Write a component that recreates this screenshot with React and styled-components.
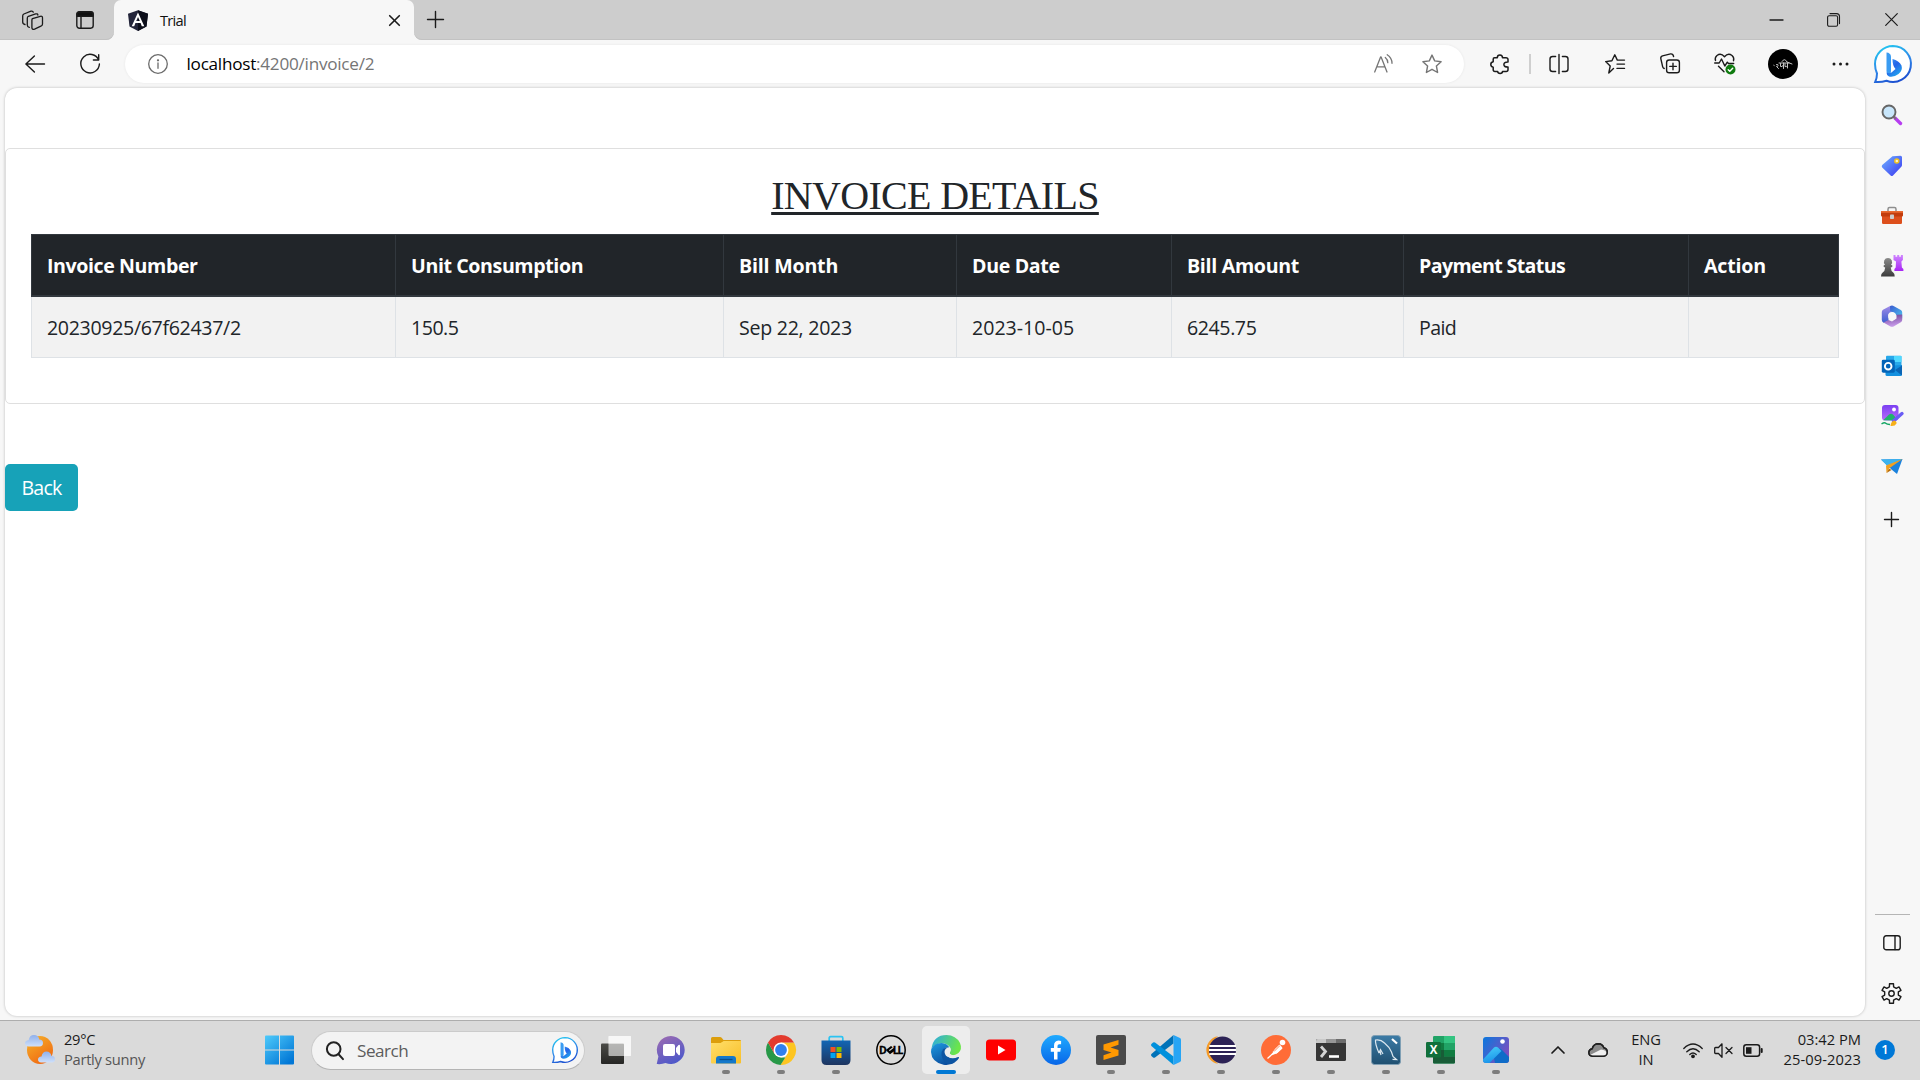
import React from 'react';
import styled, { createGlobalStyle } from 'styled-components';

const GlobalStyle = createGlobalStyle`
  * { box-sizing: border-box; }
  html, body { margin: 0; padding: 0; }
  body { font-family: "Open Sans", "Noto Sans", sans-serif; color: #212529; overflow: hidden; }
  svg { display: block; flex: none; overflow: visible; }
`;

const Screen = styled.div`
  width: 1920px;
  height: 1080px;
  display: flex;
  flex-direction: column;
  background: #f7f7f7;
`;

const Slot = styled.div`
  flex: none;
  width: ${p => (p.$w ? `${p.$w}px` : '100%')};
  height: ${p => (p.$h ? `${p.$h}px` : '100%')};
  display: flex;
  align-items: center;
  justify-content: center;
`;

const Label = styled.span`
  font-size: ${p => p.$size || 14.7}px;
  letter-spacing: ${p => p.$ls || 0}px;
  color: ${p => p.$color || 'inherit'};
  white-space: nowrap;
`;

/* ---------- tab strip ---------- */
const TabStrip = styled.div`
  flex: none;
  height: 40px;
  display: flex;
`;
const StripLeft = styled.div`
  width: 114px;
  padding-left: 11px;
  display: flex;
  background: #cdcdcd;
  border-bottom-right-radius: 8px;
  box-shadow: inset 0 -1px 0 #c2c2c2;
`;
const TabHolder = styled.div`
  width: 300px;
  background: linear-gradient(#cdcdcd 50%, #f7f7f7 50%);
`;
const Tab = styled.div`
  height: 100%;
  padding-left: 14px;
  display: flex;
  align-items: center;
  background: #f7f7f7;
  border-radius: 7px 7px 0 0;
`;
const TabTitle = styled(Label)`
  margin-left: 12px;
  padding-bottom: 1px;
  flex: 1;
  color: #111;
`;
const StripRight = styled.div`
  flex: 1;
  padding-bottom: 1px;
  display: flex;
  background: #cdcdcd;
  border-bottom-left-radius: 8px;
  box-shadow: inset 0 -1px 0 #c2c2c2;
`;
const Grow = styled.div`
  flex: 1;
`;

/* ---------- address bar ---------- */
const Toolbar = styled.div`
  flex: none;
  height: 48px;
  padding: 0 1px 1px 15px;
  display: flex;
  align-items: center;
`;
const AddressPill = styled.div`
  flex: 1;
  height: 38px;
  margin: 0 6px 0 15px;
  padding: 0 8px 0 2px;
  display: flex;
  align-items: center;
  background: #fff;
  border-radius: 19px;
  box-shadow: 0 0 3px rgba(0, 0, 0, 0.07);
`;
const Url = styled(Label)`
  flex: 1;
  margin-left: -1.5px;
  padding-bottom: 1px;
  color: #000;
`;
const UrlPath = styled.span`
  color: #757575;
`;
const Separator = styled.div`
  width: 2px;
  height: 20px;
  background: #cfcfcf;
`;
const Avatar = styled.div`
  width: 30px;
  height: 30px;
  border-radius: 50%;
  background: #000;
  display: flex;
  align-items: center;
  justify-content: center;
`;

/* ---------- page ---------- */
const Body = styled.div`
  flex: 1;
  min-height: 0;
  display: flex;
`;
const Page = styled.main`
  width: 1860px;
  height: 928px;
  margin: 0 0 0 5px;
  padding-top: 60px;
  background: #fff;
  border-radius: 12px;
  box-shadow: 0 0 3px rgba(0, 0, 0, 0.25);
`;
const Card = styled.section`
  height: 256px;
  padding: 24px 25px 0;
  border: 1px solid #dfdfdf;
  border-radius: 5px;
`;
const Title = styled.h2`
  margin: 0;
  height: 61px;
  line-height: 46px;
  text-align: center;
  font-family: "Liberation Serif", serif;
  font-size: 40px;
  font-weight: 400;
  letter-spacing: -0.68px;
  text-decoration: underline;
  text-decoration-thickness: 3px;
  text-underline-offset: 3px;
  text-decoration-skip-ink: none;
`;
const InvoiceTable = styled.table`
  width: 1808px;
  table-layout: fixed;
  border-collapse: separate;
  border-spacing: 0;
`;
const Th = styled.th`
  width: ${p => p.$w}px;
  height: 63px;
  padding: 1px 15px 0;
  text-align: left;
  font-weight: 700;
  font-size: 19.6px;
  letter-spacing: ${p => p.$ls}px;
  color: #fff;
  background: #212529;
  border: solid #32383e;
  border-width: 1px 0 2px 1px;
  &:last-child { border-right-width: 1px; }
`;
const Td = styled.td`
  height: 61px;
  padding: 0 15px;
  font-size: 19.6px;
  letter-spacing: ${p => p.$ls}px;
  background: #f2f2f2;
  border: solid #dee2e6;
  border-width: 0 0 1px 1px;
  &:last-child { border-right-width: 1px; }
`;
const BackButton = styled.button`
  display: block;
  width: 73px;
  height: 47px;
  margin-top: 60px;
  padding: 0;
  border: 0;
  border-radius: 5px;
  background: #17a2b8;
  color: #fff;
  font: 400 19.6px "Open Sans", sans-serif;
  letter-spacing: -0.8px;
`;

/* ---------- edge sidebar ---------- */
const Sidebar = styled.aside`
  flex: 1;
  padding: 3px 2px 2px 0;
  display: flex;
  flex-direction: column;
`;
const SidebarRule = styled.div`
  width: 35px;
  height: 1px;
  margin: 0 0 3px 10px;
  background: #b5b5b5;
`;

/* ---------- taskbar ---------- */
const Taskbar = styled.footer`
  flex: none;
  height: 60px;
  padding: 0 0 1px 25px;
  display: flex;
  align-items: center;
  background: #dadada;
  border-top: 1px solid #adadad;
`;
const Weather = styled.div`
  width: 240px;
  display: flex;
  align-items: center;
  gap: 9px;
`;
const Lines = styled.div`
  width: ${p => (p.$w ? `${p.$w}px` : 'auto')};
  padding-bottom: 2px;
  display: flex;
  flex-direction: column;
  align-items: ${p => p.$align || 'flex-start'};
  line-height: 20px;
  color: #1a1a1a;
`;
const SearchPill = styled.div`
  width: 274px;
  height: 39px;
  margin: 0 3px 0 17px;
  padding: 0 6px 0 14px;
  display: flex;
  align-items: center;
  background: #f3f3f3;
  border: 1px solid #cbcbcb;
  border-bottom-color: #b4b4b4;
  border-radius: 20px;
`;
const SearchText = styled(Label)`
  flex: 1;
  margin-left: 13px;
  color: #5c5c5c;
`;
const AppSlot = styled.div`
  width: 55px;
  height: 48px;
  display: flex;
  justify-content: center;
`;
const AppTile = styled.div`
  width: 48px;
  height: 48px;
  padding-top: 9px;
  display: flex;
  flex-direction: column;
  align-items: center;
  justify-content: space-between;
  border-radius: 5px;
  background: ${p => (p.$active ? '#ededed' : 'transparent')};
`;
const Indicator = styled.div`
  width: ${p => (p.$active ? 20 : 8)}px;
  height: 4px;
  border-radius: 2px;
  background: ${p => (p.$active ? '#0078d4' : p.$running ? '#7d7d7d' : 'transparent')};
`;
const Badge = styled.div`
  width: 20px;
  height: 20px;
  border-radius: 50%;
  background: #0078d7;
  color: #fff;
  font-size: 13px;
  font-weight: 600;
  line-height: 19px;
  text-align: center;
`;

/* ---------- line icons ---------- */
const Line = ({ w = 20, h = w, c = '#1b1b1b', s = 1.4, children }) => (
  <svg width={w} height={h} viewBox={`0 0 ${w} ${h}`} fill="none" stroke={c} strokeWidth={s} strokeLinecap="round" strokeLinejoin="round">{children}</svg>
);
const Workspaces = () => (
  <Line w={21} h={20} s={1.3}>
    <path d="M10.500 8.600 18.300 6.300Q20.600 5.800 20.500 8v6q0 1.200-1.100 1.800l-6.800 3.300Q10 20 9.900 17.600V10Q9.900 9 10.500 8.600z" />
    <path d="M7.300 17.400Q5.300 17 5.300 15V8.300Q5.300 7 6.400 6.300L13.600 3.900Q15.500 3.400 15.900 5" />
    <path d="M3 14.500Q.7 14 .7 12V6Q.7 4.700 1.900 4L9 1.200Q10.800.7 11.300 2.200" />
  </Line>
);
const TabActions = () => (
  <Line w={18} h={18}>
    <rect x=".8" y=".8" width="16.400" height="16.400" rx="2.600" />
    <path d="M1 5.200V3.400Q1 1 3.400 1h11.200Q17 1 17 3.400v1.800z" fill="#111" />
    <path d="M5 5v12" />
  </Line>
);
const AngularIcon = () => (
  <svg width="20" height="21" viewBox="0 0 20 21">
    <path d="M10 .2 0 3.700l1.500 12.900L10 21l8.500-4.400L20 3.700z" fill="#23253a" />
    <path d="M10 .2v20.800l8.500-4.400L20 3.700z" fill="#0c0e1a" />
    <path d="M10 2.600 3.700 16.200h2.500l1.200-3.100h5.200l1.200 3.100h2.500zM10 7l1.800 4.100H8.200z" fill="#fff" />
  </svg>
);
const Cross = ({ w, s = 1.5 }) => <Line w={w} s={s}><path d={`M.7.7 ${w - 0.7} ${w - 0.7}M${w - 0.7}.7.7 ${w - 0.7}`} /></Line>;
const Plus = ({ w, s = 1.4, c }) => <Line w={w} s={s} c={c}><path d={`M${w / 2} .5V${w - 0.5}M.5 ${w / 2}H${w - 0.5}`} /></Line>;
const BackArrow = () => <Line w={20} h={18}><path d="M19.500 9H1M9.400.9.900 9l8.500 8.100" /></Line>;
const Reload = () => <Line w={20} h={20}><path d="M18.700 6A9.300 9.300 0 1 0 19.400 10M18.700.8V6H13.400" /></Line>;
const Info = () => (
  <Line w={20} c="#6b6b6b" s={1.3}><circle cx="10" cy="10" r="9.300" /><path d="M10 9v5.300" /><circle cx="10" cy="6.300" r=".5" fill="#6b6b6b" /></Line>
);
const ReadAloud = () => (
  <Line w={19} h={19} c="#757575" s={1.3}>
    <path d="M.7 18 6.600 3h.5L13 18M2.700 12.800H11M11.300 3.500q2.400 2 2.500 5.200M13.200.800q4.700 3 4.800 8.500" />
  </Line>
);
const STAR = 'M10 1.100 12.700 6.900 19.100 7.700 14.400 12 15.600 18.500 10 15.300 4.400 18.500 5.600 12 .9 7.700 7.300 6.900z';
const Star = () => <Line w={20} c="#757575"><path d={STAR} /></Line>;
const Puzzle = () => (
  <Line w={20} h={20} s={1.5}>
    <path d="M4.500 3.800H7.300Q7.300.9 9.900.9t2.600 2.900H16Q18 3.800 18 5.600V8Q13.900 7.800 13.900 10.500T18 13.100v2.700q0 1.700-1.800 1.700h-3.700q0 1.900-2.400 1.900t-2.400-1.900H5Q3.200 17.500 3.200 15.800V13.200Q.8 12.800.8 10.500T3.200 7.800V5.200Q3.200 3.800 4.500 3.800z" />
  </Line>
);
const SplitScreen = () => (
  <Line w={20} h={20}><path d="M10 .5v19M6.600 2.500H3.600Q1 2.500 1 5v10q0 2.500 2.600 2.500h3M13.400 2.500h3Q19 2.500 19 5v10q0 2.500-2.600 2.500h-3" /></Line>
);
const Favorites = () => (
  <Line w={20} h={20}><path d="M8.500 14.900 3.800 19.300 5.200 12.300.7 7.900 6.900 7 9.800 1.100 12.300 6.400H19.500M12 10.400h7.500M12 14.700h7.500" transform="translate(0 -.3)" /></Line>
);
const Collections = () => (
  <Line w={20} h={21}>
    <rect x="6.600" y="7" width="12.800" height="12.800" rx="2.600" />
    <path d="M13 10.200v6.500M9.800 13.400h6.500M4.200 15.500Q3 15 2.700 13.800L.8 5.600Q.5 3.500 2.500 2.900L10.600.9q2.400-.3 3 2.600" />
  </Line>
);
const Health = () => (
  <svg width="22" height="22" viewBox="0 0 22 22" fill="none" stroke="#1b1b1b" strokeWidth="1.400" strokeLinecap="round" strokeLinejoin="round">
    <path d="M1.500 7.500Q.5 4.600 3 2.500 7-.4 10.500 3.800 14-.4 18 2.500q2.500 2.200 1.500 5.200M.7 10h4.500l2.300-4 3.300 7 2.500-3.800 1.200 1.300h5.200M4.500 13.300l5.500 5.400" />
    <circle cx="16.500" cy="16.500" r="5" fill="#0f7b0f" stroke="none" />
    <path d="m14.200 16.700 1.600 1.500 2.900-3" stroke="#fff" />
  </svg>
);
const AvatarArt = () => (
  <svg width="20" height="14" viewBox="0 0 20 14" fill="none" stroke="#c4c4c4" strokeWidth="1" strokeLinecap="round">
    <path d="M6 6h10M3.500 7.500q2-.5 1.500 1T3.500 9.500l2 2M7.500 6.500v3q2 .8 2.500-1M10.500 6v5.500M12 6.500v3q1.500.8 2-.5M14.500 6v5M9 4.500q2.500-4 5 .5l5 2M.8 8.300l.4.200" />
  </svg>
);
const Dots = () => (
  <svg width="17" height="4" viewBox="0 0 17 4" fill="#1b1b1b"><circle cx="2" cy="2" r="1.500" /><circle cx="8.500" cy="2" r="1.500" /><circle cx="15" cy="2" r="1.500" /></svg>
);
const Bing = ({ w, id }) => (
  <svg width={w} height={w} viewBox="0 0 38 38">
    <defs>
      <linearGradient id={`${id}r`} x1=".2" y1="0" x2=".6" y2="1"><stop offset="0" stopColor="#22c7f0" /><stop offset=".55" stopColor="#2f86e8" /><stop offset="1" stopColor="#1c4fd0" /></linearGradient>
      <linearGradient id={`${id}b`} x1="0" y1="0" x2=".7" y2="1"><stop offset="0" stopColor="#3aa0f5" /><stop offset=".5" stopColor="#2563e8" /><stop offset="1" stopColor="#22a8ee" /></linearGradient>
    </defs>
    <path d="M19 1A18 18 0 1 1 12.500 35.800Q7 37.500 1.200 37 3 33 3 28.500 1 24 1 19A18 18 0 0 1 19 1z" fill="#fff" stroke={`url(#${id}r)`} strokeWidth="2" />
    <path d="M12.500 7.500q4 .3 4.500 4V26q0 3-2.500 3.500-2-.5-2-3.500z" fill="#3a9cf2" />
    <path d="M18.500 14q6.500 1.500 9 6.500 1.500 5-3 8.500-4.500 3.500-9.500 2.500-2.500-1-2.500-4 2.500 1.500 5 0l4-3.500Q18.500 21 18.500 14z" fill={`url(#${id}b)`} />
  </svg>
);
const Minimize = () => <Line w={13} h={2} s={1.3}><path d="M0 1h13" /></Line>;
const Restore = () => <Line w={13} h={14} s={1.1}><rect x=".6" y="2.800" width="10" height="10.500" rx="1.500" /><path d="M3 .6h6.500q3 0 3 3v7" /></Line>;
const PanelIcon = () => <Line w={18} h={16}><rect x=".8" y=".8" width="16.400" height="14" rx="2.400" /><path d="M12 1v13.600" /></Line>;
const Gear = () => {
  const pts = [];
  for (let i = 0; i < 6; i += 1) {
    const a = (i * Math.PI) / 3 - Math.PI / 2;
    [[-0.3, 7], [-0.2, 10], [0.2, 10], [0.3, 7]].forEach(([d, r]) => pts.push(`${(10.5 + r * Math.cos(a + d)).toFixed(2)} ${(10.5 + r * Math.sin(a + d)).toFixed(2)}`));
  }
  return <Line w={21} h={21}><path d={`M${pts.join('L')}z`} /><circle cx="10.500" cy="10.500" r="2.700" /></Line>;
};

/* ---------- sidebar icons ---------- */
const SideSvg = ({ children }) => <svg width="22" height="22" viewBox="0 0 22 22">{children}</svg>;
const Grad = ({ id, a, b, x2 = 1, y2 = 1 }) => (
  <linearGradient id={id} x1="0" y1="0" x2={x2} y2={y2}><stop offset="0" stopColor={a} /><stop offset="1" stopColor={b} /></linearGradient>
);
const SideSearch = () => (
  <SideSvg>
    <g transform="translate(0 -1)">
      <path d="m14 14 5.500 5.500" stroke="#b63df0" strokeWidth="3.400" strokeLinecap="round" />
      <path d="m12.500 12.500 2.500 2.500" stroke="#777" strokeWidth="1.800" />
      <circle cx="8" cy="8" r="6.500" fill="#c8e6fb" stroke="#666" strokeWidth="1.900" />
    </g>
  </SideSvg>
);
const SideTag = () => (
  <SideSvg>
    <defs><Grad id="tag" a="#6fb4ff" b="#3a35f0" /></defs>
    <path d="M11.500 1.200 19.500.7Q21 .7 21 2.200V10q0 1-.7 1.700L12 20.500q-1.200 1-2.400 0L1.200 12.400q-1-1.200 0-2.400z" fill="url(#tag)" />
    <circle cx="15.800" cy="6" r="2" fill="#fff5c8" stroke="#f0c020" strokeWidth="1.500" />
  </SideSvg>
);
const SideToolbox = () => (
  <SideSvg>
    <path d="M7 6V4.200Q7 2.500 8.500 2.500h5Q15 2.500 15 4.200V6" fill="none" stroke="#8e8e8e" strokeWidth="1.500" />
    <rect x="1" y="9" width="20" height="10" rx="1.200" fill="#dd4f1c" />
    <path d="M0 7q0-1 1-1h20q1 0 1 1v3.500q0 1-1 1H1q-1 0-1-1z" fill="#c23c0c" />
    <path d="M0 7q0-1 1-1h20q1 0 1 1v.8H0z" fill="#ea6a30" />
    <rect x="9" y="9.500" width="4" height="4.500" rx=".8" fill="#ccc" />
  </SideSvg>
);
const SideGames = () => (
  <SideSvg>
    <defs><Grad id="rook" a="#cf86ff" b="#a825f4" x2={0} /><Grad id="pawn" a="#8a8a8a" b="#3c3c3c" x2={0} /></defs>
    <path d="M12.500 0h2v1.800h1.700V0h2v1.800h1.700V0h2v5l-1.500 1.500.5 6 1.500 1.500v2h-9v-2l1.300-1.500.3-6L12.500 5z" fill="url(#rook)" />
    <path d="M7 3a4 4 0 0 1 3 6.700q1.500.3 1.500 1.300T9.700 12.500q.3 3.500 2.500 5 1.500 1 1.500 4H0Q0 18.500 1.700 17.500q2.300-1.500 2.500-5Q2.500 12 2.500 11T4 9.700A4 4 0 0 1 7 3z" fill="url(#pawn)" />
  </SideSvg>
);
const SideM365 = () => (
  <SideSvg>
    <defs><Grad id="m1" a="#a18be8" b="#3b5fd0" x2={0} /><Grad id="m2" a="#3a5bd0" b="#4cc4f0" /><Grad id="m3" a="#6d4296" b="#c69ae8" x2={0.2} /></defs>
    <path d="M9.500.8 11 7.500 7.500 9.500v6L3 18Q.8 16.800.8 15V7Q.8 5.500 2 4.800z" fill="url(#m1)" />
    <path d="M9 1.200q2-1.400 4 0l6.800 3.700q1.400.9 1.400 2.500v6.100l-6.400-3.700V9L9.200 6z" fill="url(#m2)" />
    <path d="m21.200 9.500V15q0 1.500-1.400 2.300L13 21.200q-2 1.100-4 0L2.500 17.500l5-2.500 3.500 1.500 4.500-3v-3.700z" fill="url(#m3)" />
    <circle cx="11" cy="11" r="3.900" fill="#f7f7f7" />
  </SideSvg>
);
const Letter = styled.text`
  font-family: "Open Sans", "Noto Sans", sans-serif;
  font-weight: 700;
  fill: ${p => p.$fill || '#fff'};
  text-anchor: middle;
`;
const SideOutlook = () => (
  <SideSvg>
    <rect x="5" y=".7" width="15.500" height="14" rx="1" fill="#28a8ea" />
    <rect x="13" y="1" width="7.500" height="6" fill="#50d9ff" />
    <path d="M4.500 11 21 10v9.500q0 1.500-1.500 1.500H6q-1.500 0-1.500-1.500z" fill="#1490df" />
    <path d="M21 10.500 14 15l7 5.500z" fill="#0a65b5" />
    <rect x=".8" y="4.700" width="13" height="13" rx="1.400" fill="#0364b8" />
    <circle cx="7.200" cy="11.200" r="3.300" fill="none" stroke="#fff" strokeWidth="1.900" />
  </SideSvg>
);
const SideDesigner = () => (
  <SideSvg>
    <defs><Grad id="ds" a="#7a3ff2" b="#b96cf8" x2={0} /></defs>
    <rect x="1" y="0" width="16.500" height="15.500" rx="3" fill="url(#ds)" />
    <path d="M2.200 15.300 8 9.400q2-1.500 4 0l3.500 4.200-1.500 2z" fill="#20b36b" />
    <circle cx="13" cy="4.500" r="1.900" fill="#fff" />
    <path d="M12.500 16 21 8.500" stroke="#6a5cf5" strokeWidth="3.400" strokeLinecap="round" />
    <path d="M9.500 21q.3-4.500 3.500-5.500 3 1 2.500 3-1.500 3-6 2.500z" fill="#f7b018" />
    <path d="M.5 19q3-2 4.200-.8t4.300 1.300" stroke="#16a765" strokeWidth="1.500" fill="none" />
  </SideSvg>
);
const SideDrop = () => (
  <SideSvg>
    <path d="M0 4.500 21.500 4 16 19 10.500 14.500z" fill="#1b82dd" />
    <path d="M0 4.500 21.500 4 6.500 11z" fill="#3db3ee" />
    <path d="M21.500 4 5 10.500 5.500 18 8 13.500z" fill="#f0a020" />
    <path d="m5.500 18 2.500-4.500 2.500 1.500z" fill="#b86c08" />
  </SideSvg>
);

/* ---------- taskbar icons ---------- */
const App30 = ({ children }) => <svg width="30" height="30" viewBox="0 0 30 30">{children}</svg>;
const WeatherIcon = () => (
  <svg width="30" height="32" viewBox="0 0 30 32">
    <defs><Grad id="sun" a="#f6b52c" b="#f06a12" x2={0.6} /><Grad id="cl" a="#8fb0ec" b="#cfe0fa" x2={0} /></defs>
    <ellipse cx="15" cy="16" rx="13" ry="14" fill="url(#sun)" />
    <path d="M3.500 12.500Q0 12 0 9.300 0 6.500 3.600 6.200 4.500 1 9 1t5.300 4.500q3.700.2 3.700 3.600t-3.500 3.400z" fill="url(#cl)" />
    <path d="M16 28.500q-3-.3-3-3t3.500-3Q17.500 17.500 21.500 17.500T26.500 22q3.500 0 3.500 3.300t-3.400 3.200z" fill="url(#cl)" />
  </svg>
);
const WindowsLogo = () => (
  <svg width="29" height="30" viewBox="0 0 29 30">
    <defs><linearGradient id="win" gradientUnits="userSpaceOnUse" x1="0" y1="0" x2="24" y2="28"><stop offset="0" stopColor="#4fcbfb" /><stop offset="1" stopColor="#0177d6" /></linearGradient></defs>
    <path fill="url(#win)" d="M1 .5h13v14H0V1.500Q0 .5 1 .5zM15 .5h13q1 0 1 1v13H15zM0 15.500h14v14H1q-1 0-1-1zM15 15.500h14v13q0 1-1 1H15z" />
  </svg>
);
const SearchGlass = () => <Line w={18} h={19} s={2} c="#222"><circle cx="7.700" cy="8" r="6.800" /><path d="m12.600 13.300 4.400 4.800" /></Line>;
const TaskView = () => (
  <App30>
    <defs><Grad id="tv" a="#4a4a46" b="#262624" x2={0} /></defs>
    <rect x="0" y="8.500" width="23" height="20.500" rx="1" fill="url(#tv)" />
    <rect x="7.500" y="1" width="22.500" height="20" rx="1" fill="#fff" opacity=".6" />
    <path d="M7.500 1H30v20h-7V8.500H7.500z" fill="#fbfbfb" opacity=".6" />
  </App30>
);
const Teams = () => (
  <App30>
    <defs><Grad id="tm" a="#a06cb0" b="#5059c9" x2={0.5} /></defs>
    <path d="M15 1a14 14 0 1 1-5.500 27Q5.500 29.500 1.200 29 .3 28.700 1 27.700L2.400 21.500A14 14 0 0 1 15 1z" fill="url(#tm)" />
    <rect x="7" y="9" width="12" height="12" rx="2" fill="#fff" /><path d="m20 13 2.500-3Q24 9 24 11v8q0 2-1.500 1L20 17z" fill="#fff" />
  </App30>
);
const Explorer = () => (
  <App30>
    <defs><Grad id="ex" a="#ffdf6b" b="#f8bf28" /></defs>
    <path d="M0 3.500Q0 2 1.500 2H9q1 0 1.700.8L12.500 5H29q1 0 1 1v7H0z" fill="#dc9e0c" />
    <path d="M0 8h9.500L12.700 6H30v21.500q0 1-1 1H1q-1 0-1-1z" fill="url(#ex)" />
    <path d="M5 28.500V24q0-3 3-3h14q3 0 3 3v4.500z" fill="#1478ca" /><path d="M8.500 24.500h13" stroke="#0b4f8c" strokeWidth="1.300" />
  </App30>
);
const Chrome = () => (
  <App30>
    <path d="M15 7.500H28A15 15 0 0 1 14.500 30L21.500 18.700z" fill="#fdc521" />
    <path d="M2 7.500 8.500 18.700 15 22.500h4.300L14.500 30A15 15 0 0 1 2 7.500z" fill="#279847" />
    <path d="M15 7.500h13A15 15 0 0 0 2 7.500l6.500 11.200z" fill="#e33b2e" />
    <circle cx="15" cy="15" r="7.500" fill="#fff" /><circle cx="15" cy="15" r="5.900" fill="#3180ee" />
  </App30>
);
const Store = () => (
  <App30>
    <defs><Grad id="st" a="#1266b4" b="#1e3560" x2={0} /></defs>
    <path d="M8.200 6.500V3Q8.200 1.700 9.500 1.700h11Q21.800 1.700 21.800 3V6.500" fill="none" stroke="#2bc3f2" strokeWidth="1.700" />
    <path d="M.5 5.500h29V25q0 5-5 5h-19q-5 0-5-5z" fill="url(#st)" />
    <path d="M9.500 12h5v5h-5z" fill="#f25022" /><path d="M15.500 12h5v5h-5z" fill="#7fba00" /><path d="M9.500 18h5v5h-5z" fill="#00a4ef" /><path d="M15.500 18h5v5h-5z" fill="#ffb900" />
  </App30>
);
const Dell = () => (
  <App30>
    <circle cx="15" cy="15" r="14.200" fill="none" stroke="#000" strokeWidth="1.500" />
    <Letter x="7" y="18.700" fontSize="10.500" $fill="#000" stroke="#000" strokeWidth=".3">D</Letter>
    <Letter x="19.800" y="18.700" fontSize="10.500" $fill="#000" stroke="#000" strokeWidth=".3">L</Letter>
    <Letter x="24.500" y="18.700" fontSize="10.500" $fill="#000" stroke="#000" strokeWidth=".3">L</Letter>
    <path d="m9.800 15 5.200-4 1.700 1.300-3.800 3 .9.700 3.800-3 .8.700v2.300L14 19.200z" fill="#000" />
  </App30>
);
const Edge = () => (
  <App30>
    <defs><Grad id="e1" a="#2aa9e8" b="#6be54a" x2={1} y2={0.3} /><Grad id="e2" a="#1f9ae0" b="#0b4fa0" x2={0.5} /></defs>
    <path d="M.5 13.500Q2.500 0 15.500 0 25 .3 29 8q2.500 6-1.500 10-4 3.300-8 1.500-1.500-1-.5-2.500 1.500-2 .5-4Q17 8.500 10.500 8.300 4 8.500.5 13.500z" fill="url(#e1)" />
    <path d="M.3 14Q3 8 10.500 8q5.500.3 8 4.500-4.500-1.200-6.500 2.500-2 5.500 2.500 10 4 3.500 9.500 2-5 4-11.500 2.800Q.5 27 0 17z" fill="url(#e2)" />
    <path d="M18 12.200q-8-.5-7.500 8 1.200 8.500 9.500 8.800 5-1.300 8-6 .2-1.500-1-1-7 3-11.300-1.500Q14 16.500 18 12.200z" fill="#0d55a3" />
    <path d="M18.500 12.300q-5 .7-5 4.700.5 4.500 5 5.500 4 .7 8.500-1 1-.4 1.400.4l.6-2.900-3.500 1.500q-4.500.5-6.500-1.500-.7-1 .2-2.300 1.300-2.300-.7-4.400z" fill="#ededed" />
  </App30>
);
const YouTube = () => <App30><rect x="0" y="4.500" width="30" height="21" rx="3.500" fill="#f00" /><path d="M12 10.500v9l7.500-4.500z" fill="#fff" /></App30>;
const Facebook = () => (
  <App30>
    <defs><Grad id="fb" a="#1faaff" b="#0866e8" x2={0} /></defs>
    <circle cx="15" cy="15" r="15" fill="url(#fb)" />
    <path d="M13 24.500V16.800H9.800V13H13v-2.200q0-5 4.600-5.200 1.500 0 2.500.3v3.300h-1.900q-1.700.2-1.700 1.900V13h3.400l-.6 3.800h-2.800v7.700z" fill="#fff" />
  </App30>
);
const Sublime = () => (
  <App30>
    <rect width="30" height="30" rx="2" fill="#4a4a4a" />
    <path d="m7.500 9.500 15-4.500v4.800l-8 2.700 8 2.500v5.500l-15 4.500v-4.800l8-2.700-8-2.500z" fill="#ff9800" />
  </App30>
);
const VSCode = () => (
  <App30>
    <path d="M22.500 0v8.500L4 22.500q-1 .6-1.900 0L.4 21q-.8-1 0-1.900z" fill="#0072b8" />
    <path d="M22.500 30v-8.500L4 7.500Q3 6.900 2.100 7.500L.4 9q-.8 1 0 1.900z" fill="#0090dc" />
    <path d="M22.500 0 29 3q1 .5 1 1.700v20.600q0 1.200-1 1.700l-6.500 3z" fill="#27a5f5" />
  </App30>
);
const Eclipse = () => (
  <App30>
    <path d="M12 1.200A14 14 0 0 0 12 28.800 17 17 0 0 1 12 1.200z" fill="#f59b28" />
    <circle cx="16.500" cy="15" r="13.500" fill="#2c2255" />
    <path d="M3.300 11h26.700M3 15h27M3.300 19h26.700" stroke="#fff" strokeWidth="1.900" />
  </App30>
);
const Postman = () => (
  <App30>
    <circle cx="15" cy="15" r="15" fill="#ff6c37" />
    <circle cx="21.500" cy="7.500" r="2.800" fill="#fff" />
    <path d="m19 9.500 2.500 3.500-5 5-6 2.500 3.500-6.500z" fill="#fff" /><path d="M6.500 23.500 14 16.500M12 17.500l6.500-7M14.500 18.500 21 13" stroke="#fff" strokeWidth="1.300" /><path d="m13 16.500 6-6" stroke="#ff6c37" strokeWidth=".8" />
  </App30>
);
const Terminal = () => (
  <App30>
    <rect x="0" y="4" width="30" height="22" rx="1.500" fill="#363636" /><path d="M0 5.500Q0 4 1.500 4H10v4H0z" fill="#c9c9c9" /><path d="M10 4h10v4H10z" fill="#979797" /><path d="M20 4h8.500Q30 4 30 5.500V8H20z" fill="#6c6c6c" />
    <path d="M5 11.500 9.500 16.500 5 22" stroke="#d4d4d4" strokeWidth="2.800" fill="none" /><path d="M13 21.500h10" stroke="#fff" strokeWidth="2.600" />
  </App30>
);
const MySQL = () => (
  <App30>
    <defs><Grad id="my" a="#3c7ba6" b="#1f4f70" x2={0} /></defs>
    <rect x=".5" y=".5" width="29" height="29" rx="3" fill="url(#my)" stroke="#7f9fb4" />
    <path d="M8 18Q4 9 4.500 5q5-1 9 3 5 4 7 9l1.500 4.500 3.500 3-4-.2M8 18l1.500-3.500L12 19M9 16l1 4" fill="none" stroke="#dce8f0" strokeWidth="1.200" />
    <path d="m21 4 5 4.500" stroke="#fff" strokeWidth="2.200" fill="none" />
  </App30>
);
const Excel = () => (
  <App30>
    <rect x="7" y="1" width="22" height="27.500" rx="1.300" fill="#21a366" /><path d="M18 1h9.700q1.300 0 1.300 1.300V8H18z" fill="#33c481" /><path d="M7 8h11v7H7z" fill="#107c41" /><path d="M18 15h11v6.500H18z" fill="#107c41" /><path d="M7 15h11v6.500h11v5.700q0 1.300-1.300 1.300H8.300Q7 28.500 7 27.200z" fill="#185c37" />
    <rect x="0" y="7" width="15" height="15.500" rx="1.300" fill="#10703b" />
    <Letter x="7.500" y="19" fontSize="11.500">X</Letter>
  </App30>
);
const Photos = () => (
  <App30>
    <defs><Grad id="ph" a="#0a78dd" b="#7b4fc0" x2={1} y2={0.6} /><Grad id="ph2" a="#49d0fa" b="#1c95ea" x2={0.3} /></defs>
    <rect x="2" y="2" width="26" height="26" rx="3" fill="url(#ph)" />
    <path d="M12 18.500 17 14q1.500-.8 3 0L28 22v3q0 3-3 3H14z" fill="#0f6cc8" />
    <path d="M2 24.500 13 12.500q2-1.700 4 0l3.500 3.500L8.500 28H5q-3 0-3-3z" fill="url(#ph2)" />
    <circle cx="21.500" cy="6.500" r="2.300" fill="#fff" />
  </App30>
);

const ChevronUp = () => <Line w={14} h={8} s={1.7}><path d="m1 7 6-6 6 6" /></Line>;
const CloudIcon = () => (
  <Line w={20} h={14} s={1.4} c="#222">
    <path d="M4.700 13.300Q.8 13 .8 9.500q.2-3 3.400-3.700Q5.500.8 10.500.8q4 .2 5.300 4 3.500.8 3.500 4.400-.3 3.700-4 4.100z" fill="#8b8b8b" />
    <path d="M2 12 13 6.500q5.500.5 5.500 3.500t-3.200 2.800H4.700z" fill="#f0f0f0" stroke="none" />
    <path d="M4.700 13.300Q.8 13 .8 9.500q.2-3 3.400-3.700Q5.500.8 10.500.8q4 .2 5.300 4 3.500.8 3.500 4.400-.3 3.700-4 4.100z" />
  </Line>
);
const Wifi = () => (
  <Line w={20} h={15} s={1.4}><path d="M.8 5.500q9.200-8.800 18.400 0M3.800 8.700q6.200-6 12.400 0M6.800 11.500q3.200-3 6.400 0" /><circle cx="10" cy="13.300" r="1.200" fill="#1b1b1b" /></Line>
);
const Muted = () => <Line w={19} h={15} s={1.3}><path d="M8 .8 4.500 4.500H1.500Q.7 4.500.7 5.300v4.400q0 .8.8.8h3L8 14.200zM12 4.500l6 6M18 4.500l-6 6" /></Line>;
const Battery = () => <Line w={20} h={13} s={1.5}><rect x=".8" y=".8" width="15.800" height="11.400" rx="2.500" /><path d="M18.700 5v3" strokeWidth="2" /><path d="M3 3.200h5.500v6.600H3z" fill="#1b1b1b" stroke="none" /></Line>;

const columns = [
  { head: 'Invoice Number', hls: -0.41, w: 364, value: '20230925/67f62437/2', vls: -0.34 },
  { head: 'Unit Consumption', hls: -0.4, w: 328, value: '150.5', vls: -0.5 },
  { head: 'Bill Month', hls: -0.2, w: 233, value: 'Sep 22, 2023', vls: -0.27 },
  { head: 'Due Date', hls: -0.35, w: 215, value: '2023-10-05', vls: 0 },
  { head: 'Bill Amount', hls: -0.3, w: 232, value: '6245.75', vls: -0.42 },
  { head: 'Payment Status', hls: -0.63, w: 285, value: 'Paid', vls: -0.6 },
  { head: 'Action', hls: -0.2, w: 151, value: '', vls: 0 },
];

const apps = [
  { Icon: TaskView }, { Icon: Teams }, { Icon: Explorer, running: true }, { Icon: Chrome, running: true },
  { Icon: Store, running: true }, { Icon: Dell }, { Icon: Edge, running: true, active: true }, { Icon: YouTube },
  { Icon: Facebook }, { Icon: Sublime, running: true }, { Icon: VSCode, running: true }, { Icon: Eclipse, running: true },
  { Icon: Postman, running: true }, { Icon: Terminal, running: true }, { Icon: MySQL, running: true },
  { Icon: Excel, running: true }, { Icon: Photos, running: true },
];

const sideIcons = [SideSearch, SideTag, SideToolbox, SideGames, SideM365, SideOutlook, SideDesigner, SideDrop];

export default function App() {
  return (
    <Screen>
      <GlobalStyle />
      <TabStrip>
        <StripLeft>
          <Slot $w={42}><Workspaces /></Slot>
          <Slot $w={64}><TabActions /></Slot>
        </StripLeft>
        <TabHolder>
          <Tab>
            <AngularIcon />
            <TabTitle $ls={-0.75}>Trial</TabTitle>
            <Slot $w={40}><Cross w={11} s={1.6} /></Slot>
          </Tab>
        </TabHolder>
        <StripRight>
          <Slot $w={43}><Plus w={17} /></Slot>
          <Grow />
          <Slot $w={57}><Minimize /></Slot>
          <Slot $w={57}><Restore /></Slot>
          <Slot $w={58}><Cross w={13} s={1.2} /></Slot>
        </StripRight>
      </TabStrip>

      <Toolbar>
        <Slot $w={40}><BackArrow /></Slot>
        <Slot $w={15} />
        <Slot $w={40}><Reload /></Slot>
        <AddressPill>
          <Slot $w={61}><Info /></Slot>
          <Url $size={17.15} $ls={-0.25}>localhost<UrlPath>:4200/invoice/2</UrlPath></Url>
          <Slot $w={50}><ReadAloud /></Slot>
          <Slot $w={48}><Star /></Slot>
        </AddressPill>
        <Slot $w={59}><Puzzle /></Slot>
        <Separator />
        <Slot $w={56}><SplitScreen /></Slot>
        <Slot $w={56}><Favorites /></Slot>
        <Slot $w={54}><Collections /></Slot>
        <Slot $w={56}><Health /></Slot>
        <Slot $w={60}><Avatar><AvatarArt /></Avatar></Slot>
        <Slot $w={54}><Dots /></Slot>
        <Slot $w={52}><Bing w={38} id="bt" /></Slot>
      </Toolbar>

      <Body>
        <Page>
          <Card>
            <Title>INVOICE DETAILS</Title>
            <InvoiceTable>
              <thead>
                <tr>{columns.map(c => <Th key={c.head} $w={c.w} $ls={c.hls}>{c.head}</Th>)}</tr>
              </thead>
              <tbody>
                <tr>{columns.map(c => <Td key={c.head} $ls={c.vls}>{c.value}</Td>)}</tr>
              </tbody>
            </InvoiceTable>
          </Card>
          <BackButton>Back</BackButton>
        </Page>
        <Sidebar>
          {sideIcons.map((Icon, i) => <Slot key={i} $h={50}><Icon /></Slot>)}
          <Slot $h={56}><Plus w={15} /></Slot>
          <Grow />
          <SidebarRule />
          <Slot $h={50}><PanelIcon /></Slot>
          <Slot $h={50}><Gear /></Slot>
        </Sidebar>
      </Body>

      <Taskbar>
        <Weather>
          <WeatherIcon />
          <Lines>
            <Label $ls={-0.3}>29°C</Label>
            <Label $ls={-0.29} $color="#555">Partly sunny</Label>
          </Lines>
        </Weather>
        <WindowsLogo />
        <SearchPill>
          <SearchGlass />
          <SearchText $size={17.15} $ls={-0.5}>Search</SearchText>
          <Bing w={26} id="bs" />
        </SearchPill>
        {apps.map(({ Icon, running, active }, i) => (
          <AppSlot key={i}>
            <AppTile $active={active}>
              <Icon />
              <Indicator $running={running} $active={active} />
            </AppTile>
          </AppSlot>
        ))}
        <Grow />
        <Slot $w={40}><ChevronUp /></Slot>
        <Slot $w={40}><CloudIcon /></Slot>
        <Lines $w={56} $align="center">
          <Label $ls={-0.1}>ENG</Label>
          <Label>IN</Label>
        </Lines>
        <Slot $w={37}><Wifi /></Slot>
        <Slot $w={25}><Muted /></Slot>
        <Slot $w={34}><Battery /></Slot>
        <Lines $w={91} $align="flex-end">
          <Label>03:42 PM</Label>
          <Label $ls={0.08}>25-09-2023</Label>
        </Lines>
        <Slot $w={48}><Badge>1</Badge></Slot>
        <Slot $w={11} />
      </Taskbar>
    </Screen>
  );
}
